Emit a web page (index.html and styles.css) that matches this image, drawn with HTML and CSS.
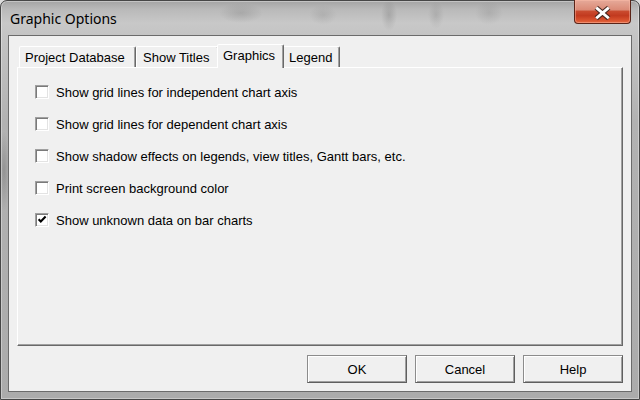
FILE: index.html
```html
<!DOCTYPE html>
<html>
<head>
<meta charset="utf-8">
<link rel="stylesheet" href="styles.css">
</head>
<body>
<div class="window">
  <div class="titlebar">
    <span class="title">Graphic Options</span>
    <div class="close">
      <svg width="57" height="23" viewBox="0 0 57 23">
        <path d="M22 7.5 L35 18.5 M35 7.5 L22 18.5" stroke="#4a2a22" stroke-width="5.2" fill="none"/>
        <path d="M22 7.5 L35 18.5 M35 7.5 L22 18.5" stroke="#ffffff" stroke-width="3" fill="none"/>
      </svg>
    </div>
  </div>
  <div class="client">
    <div class="tabs">
      <div class="tab tab-pd">Project Database</div>
      <div class="tab tab-st">Show Titles</div>
      <div class="tab tab-gr active">Graphics</div>
      <div class="tab tab-lg">Legend</div>
    </div>
    <div class="panel">
      <div class="opt"><span class="box"></span><span>Show grid lines for independent chart axis</span></div>
      <div class="opt"><span class="box"></span><span>Show grid lines for dependent chart axis</span></div>
      <div class="opt"><span class="box"></span><span>Show shadow effects on legends, view titles, Gantt bars, etc.</span></div>
      <div class="opt"><span class="box"></span><span>Print screen background color</span></div>
      <div class="opt"><span class="box"><svg width="12" height="12" viewBox="0 0 12 12"><path d="M2.6 5.2 L4.8 7.4 L9.6 2.6" stroke="#000" stroke-width="2.1" fill="none"/></svg></span><span>Show unknown data on bar charts</span></div>
    </div>
    <div class="buttons">
      <div class="btn">OK</div>
      <div class="btn">Cancel</div>
      <div class="btn">Help</div>
    </div>
  </div>
</div>
</body>
</html>
```
FILE: styles.css
```css
html, body {
  margin: 0;
  padding: 0;
}
body {
  background: #dcdcdc;
  font-family: "Liberation Sans", Arial, sans-serif;
  font-size: 13px;
  color: #000;
}
.window {
  width: 640px;
  height: 400px;
  box-sizing: border-box;
  border: 1px solid #474747;
  border-radius: 7px 7px 0 0;
  padding: 0 7px 7px;
  display: flex;
  flex-direction: column;
  background:
    radial-gradient(ellipse 22px 10px at 240px 12px, rgba(95,95,95,.22), rgba(95,95,95,0)),
    radial-gradient(ellipse 14px 10px at 322px 14px, rgba(95,95,95,.16), rgba(95,95,95,0)),
    radial-gradient(ellipse 8px 16px at 388px 14px, rgba(80,80,80,.22), rgba(80,80,80,0)),
    radial-gradient(ellipse 8px 14px at 435px 14px, rgba(80,80,80,.16), rgba(80,80,80,0)),
    radial-gradient(ellipse 14px 12px at 488px 12px, rgba(90,90,90,.16), rgba(90,90,90,0)),
    radial-gradient(ellipse 6px 40px at 3px 170px, rgba(80,80,80,.3), rgba(80,80,80,0)),
    linear-gradient(to bottom, #a4a4a4 0px, #b9b9b9 8px, #c8c8c8 22px, #c4c4c4 34px, #b2b2b2 120px, #ababab 100%);
  box-shadow: inset 0 0 0 1px rgba(255,255,255,.35);
}
.titlebar {
  height: 34px;
  flex: none;
  display: flex;
  align-items: flex-start;
}
.title {
  font-family: "Noto Sans", "Open Sans", sans-serif;
  font-size: 14px;
  line-height: 19px;
  padding: 8px 0 0 2px;
  color: #000;
}
.close {
  margin-left: auto;
  margin-right: 1px;
  margin-top: -1px;
  width: 57px;
  height: 24px;
  box-sizing: border-box;
  border: 1px solid #5a2418;
  border-top: none;
  border-radius: 0 0 4px 4px;
  background: linear-gradient(to bottom, #e6aa9a 0%, #db8b77 42%, #c94a2e 50%, #c23a1f 68%, #d9532f 88%, #e56a42 100%);
  box-shadow: inset 0 0 0 1px rgba(255,190,170,.45);
  display: flex;
}
.close svg {
  display: block;
}
.client {
  flex: 1;
  min-height: 0;
  background: #f0f0f0;
  border: 1px solid #6b6b6b;
  padding: 8px;
  display: flex;
  flex-direction: column;
}
.tabs {
  flex: none;
  height: 24px;
  display: flex;
  align-items: flex-end;
  padding-left: 2px;
  margin-bottom: -1px;
}
.tab {
  position: relative;
  height: 21px;
  margin-bottom: 1px;
  box-sizing: border-box;
  border: 1px solid;
  border-bottom: none;
  border-color: #fff #696969 transparent #fff;
  border-radius: 2px 2px 0 0;
  box-shadow: inset -1px 0 #a0a0a0;
  background: #f0f0f0;
  display: flex;
  align-items: center;
  justify-content: flex-start;
  white-space: nowrap;
}
.tab.active {
  height: 24px;
  margin: 0 -2px;
  padding-bottom: 2px;
  z-index: 1;
}
.tab-pd { width: 117px; padding-left: 5px; }
.tab-st { width: 83px; padding-left: 6px; }
.tab-gr { width: 67px; padding-left: 5px; }
.tab-lg { width: 58px; padding-left: 6px; }
.panel {
  flex: 1;
  min-height: 0;
  border: 1px solid;
  border-color: #fff #696969 #696969 #fff;
  box-shadow: inset -1px -1px #a0a0a0;
  padding: 8px 0 0 17px;
  display: flex;
  flex-direction: column;
}
.opt {
  height: 32px;
  display: flex;
  align-items: center;
  gap: 7px;
  white-space: nowrap;
}
.box {
  width: 14px;
  height: 14px;
  box-sizing: border-box;
  background: #fff;
  border: 1px solid;
  border-color: #a0a0a0 #fff #fff #a0a0a0;
  box-shadow: inset 1px 1px #7a7a7a, inset -1px -1px #e3e3e3;
  display: flex;
  flex: none;
}
.box svg {
  display: block;
}
.buttons {
  flex: none;
  margin-top: 9px;
  display: flex;
  justify-content: flex-end;
  gap: 8px;
}
.btn {
  width: 100px;
  height: 28px;
  box-sizing: border-box;
  border: 1px solid;
  border-color: #8c8c8c #5f5f5f #5f5f5f #8c8c8c;
  box-shadow: inset 1px 1px #fff, inset -1px -1px #a0a0a0;
  background: #f0f0f0;
  display: flex;
  align-items: center;
  justify-content: center;
}
```
